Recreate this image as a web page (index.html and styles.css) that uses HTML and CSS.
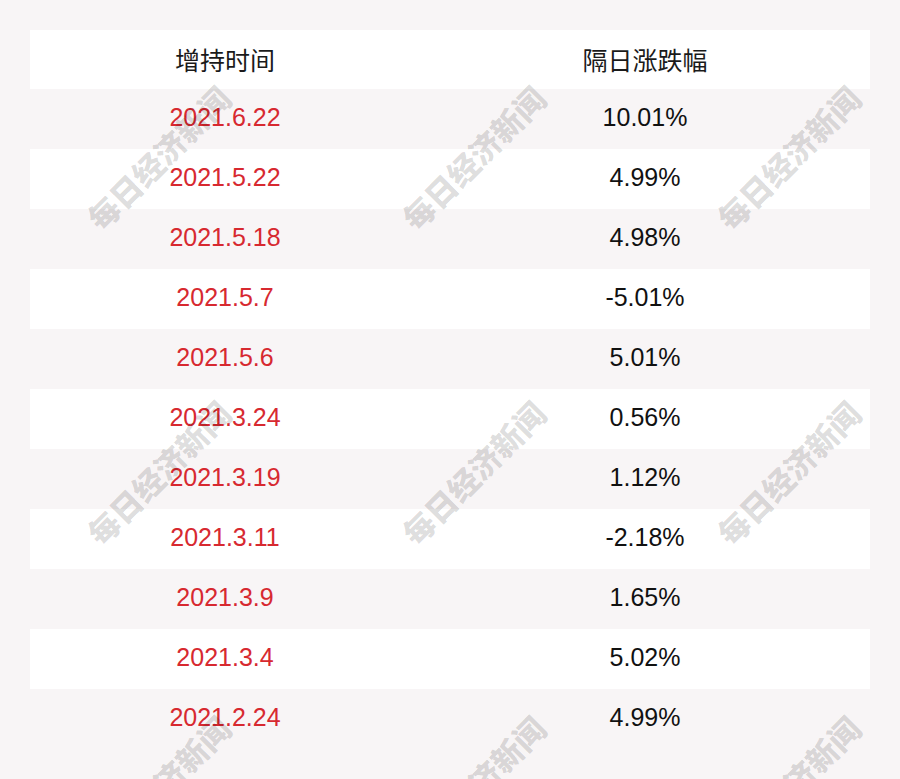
FILE: index.html
```html
<!DOCTYPE html>
<html lang="zh-CN">
<head>
<meta charset="utf-8">
<title>增持时间</title>
<link rel="stylesheet" href="styles.css">
</head>
<body>
<div class="page">
  <div class="table">
    <div class="row head"><div class="cell">增持时间</div><div class="cell">隔日涨跌幅</div></div>
    <div class="row odd"><div class="cell date">2021.6.22</div><div class="cell">10.01%</div></div>
    <div class="row even"><div class="cell date">2021.5.22</div><div class="cell">4.99%</div></div>
    <div class="row odd"><div class="cell date">2021.5.18</div><div class="cell">4.98%</div></div>
    <div class="row even"><div class="cell date">2021.5.7</div><div class="cell">-5.01%</div></div>
    <div class="row odd"><div class="cell date">2021.5.6</div><div class="cell">5.01%</div></div>
    <div class="row even"><div class="cell date">2021.3.24</div><div class="cell">0.56%</div></div>
    <div class="row odd"><div class="cell date">2021.3.19</div><div class="cell">1.12%</div></div>
    <div class="row even"><div class="cell date">2021.3.11</div><div class="cell">-2.18%</div></div>
    <div class="row odd"><div class="cell date">2021.3.9</div><div class="cell">1.65%</div></div>
    <div class="row even"><div class="cell date">2021.3.4</div><div class="cell">5.02%</div></div>
    <div class="row odd"><div class="cell date">2021.2.24</div><div class="cell">4.99%</div></div>
  </div>
  <div class="marks" aria-hidden="true">
    <div class="mark"><span>每日经济新闻</span></div>
    <div class="mark"><span>每日经济新闻</span></div>
    <div class="mark"><span>每日经济新闻</span></div>
    <div class="mark"><span>每日经济新闻</span></div>
    <div class="mark"><span>每日经济新闻</span></div>
    <div class="mark"><span>每日经济新闻</span></div>
    <div class="mark"><span>每日经济新闻</span></div>
    <div class="mark"><span>每日经济新闻</span></div>
    <div class="mark"><span>每日经济新闻</span></div>
  </div>
</div>
</body>
</html>
```
FILE: styles.css
```css
html, body {
  margin: 0;
  padding: 0;
  background: #f8f5f6;
}
.page {
  position: relative;
  width: 900px;
  height: 779px;
  overflow: hidden;
  padding: 30px;
  box-sizing: border-box;
}
.table {
  display: flex;
  flex-direction: column;
  width: 840px;
}
.row {
  display: grid;
  grid-template-columns: 390px 450px;
  height: 60px;
}
.row.head {
  height: 59px;
  background: #ffffff;
}
.row.odd {
  background: #f8f5f6;
}
.row.even {
  background: #ffffff;
}
.cell {
  display: flex;
  align-items: center;
  justify-content: center;
  font-family: "Liberation Sans", Arial, sans-serif;
  font-size: 25px;
  color: #111111;
  padding-bottom: 4px;
}
.head .cell {
  font-family: "Noto Sans CJK SC", "Liberation Sans", sans-serif;
  font-size: 25px;
  color: #1a1a1a;
  padding-bottom: 2px;
}
.cell.date {
  color: #d72930;
}
.marks {
  position: absolute;
  left: 0;
  top: 0;
  display: grid;
  grid-template-columns: repeat(3, 315px);
  grid-template-rows: repeat(3, 315px);
  pointer-events: none;
}
.mark {
  display: flex;
  align-items: center;
  justify-content: center;
}
.mark span {
  display: block;
  transform: rotate(-45deg);
  font-family: "Noto Sans CJK SC", sans-serif;
  font-weight: 900;
  font-size: 31px;
  color: rgba(0, 0, 0, 0.14);
  white-space: nowrap;
}
```
